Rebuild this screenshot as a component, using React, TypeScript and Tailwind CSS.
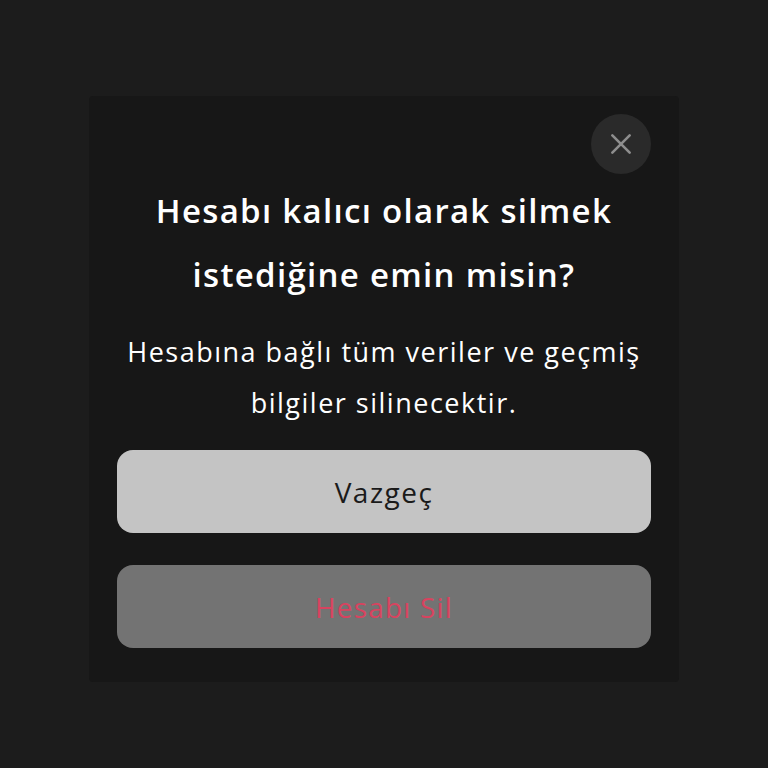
export default function App() {
  return (
    <div
      className="flex h-[768px] w-[768px] justify-center bg-[#1c1c1c] pt-[96px]"
      style={{ fontFamily: "'Open Sans', 'Noto Sans', sans-serif" }}
    >
      {/* Dialog */}
      <div className="flex h-[586px] w-[590px] flex-col items-center rounded-[4px] bg-[#171717] px-[28px] pt-[18px]">
        <div className="flex w-full justify-end">
          <button className="flex h-[60px] w-[60px] items-center justify-center rounded-full bg-[#2a2a2a]">
            <svg width="26" height="26" viewBox="0 0 24 24" fill="none" stroke="#8e8e8e" strokeWidth="2.4" strokeLinecap="round">
              <path d="M4 4L20 20M20 4L4 20" />
            </svg>
          </button>
        </div>

        <h2 className="mt-[5px] whitespace-nowrap text-center text-[33px] font-semibold leading-[64px] tracking-[1.3px] text-white">
          Hesabı kalıcı olarak silmek
          <br />
          istediğine emin misin?
        </h2>

        <p className="mt-[19px] whitespace-nowrap text-center text-[27px] leading-[51px] tracking-[1.5px] text-white">
          Hesabına bağlı tüm veriler ve geçmiş
          <br />
          bilgiler silinecektir.
        </p>

        {/* Actions */}
        <div className="mt-[22px] flex w-full flex-col gap-[32px]">
          <button className="h-[83px] w-full rounded-[16px] bg-[#c4c4c4] text-[28px] tracking-[1.5px] text-[#1a1a1a]">
            Vazgeç
          </button>
          <button className="h-[83px] w-full rounded-[16px] bg-[#737373] text-[28px] font-medium tracking-[1.2px] text-[#d8435f]">
            Hesabı Sil
          </button>
        </div>
      </div>
    </div>
  );
}
